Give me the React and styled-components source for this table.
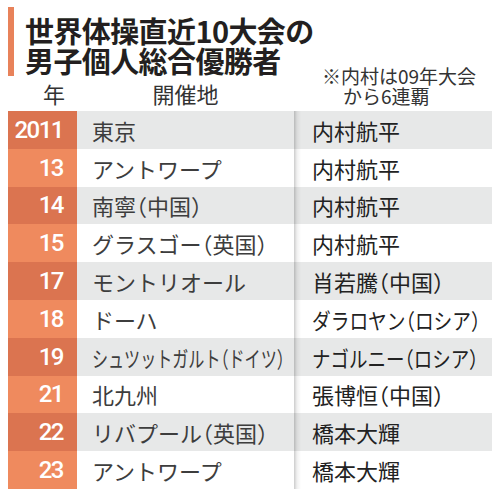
import React from 'react';
import styled, { createGlobalStyle } from 'styled-components';

const results = [
  { year: '2011', venue: '東京', winner: '内村航平' },
  { year: '13', venue: 'アントワープ', winner: '内村航平' },
  { year: '14', venue: '南寧（中国）', winner: '内村航平' },
  { year: '15', venue: 'グラスゴー（英国）', winner: '内村航平' },
  { year: '17', venue: 'モントリオール', winner: '肖若騰（中国）' },
  { year: '18', venue: 'ドーハ', winner: 'ダラロヤン（ロシア）', winnerFit: 0.85 },
  { year: '19', venue: 'シュツットガルト（ドイツ）', venueFit: 0.73, winner: 'ナゴルニー（ロシア）', winnerFit: 0.84 },
  { year: '21', venue: '北九州', winner: '張博恒（中国）' },
  { year: '22', venue: 'リバプール（英国）', winner: '橋本大輝' },
  { year: '23', venue: 'アントワープ', winner: '橋本大輝' },
];

// full-width parens are set half width, as in the newspaper font
const withParens = (text) =>
  text.split(/([（）])/).map((part, i) =>
    part === '（' || part === '）' ? <Paren key={i}>{part}</Paren> : part
  );

const App = () => {
  return (
    <>
      <GlobalStyle />
      <Wrapper>
        <Top>
          <Heading>
            <Bar />
            <Title>
              世界体操直近10大会の
              <br />
              男子個人総合優勝者
            </Title>
          </Heading>
          <ColHead align="right">年</ColHead>
          <ColHead align="center">開催地</ColHead>
          <Note>
            <span>※内村は09年大会</span>
            <span className="second">から6連覇</span>
          </Note>
        </Top>

        <Table>
          {results.map((r, i) => (
            <Row key={r.year} $shaded={i % 2 === 0}>
              <Year $shaded={i % 2 === 0}>{r.year}</Year>
              <Venue>
                <Fit $squeeze={r.venueFit}>{withParens(r.venue)}</Fit>
              </Venue>
              <Winner>
                <Fit $squeeze={r.winnerFit}>{withParens(r.winner)}</Fit>
              </Winner>
            </Row>
          ))}
        </Table>
      </Wrapper>
    </>
  );
};

const GlobalStyle = createGlobalStyle`
  body {
    margin: 0;
    background: #fff;
    font-family: 'Noto Sans CJK JP', 'Noto Sans', sans-serif;
  }
`;

const Wrapper = styled.main`
  width: 500px;
  height: 500px;
  box-sizing: border-box;
  padding: 7px 8px 0;
  overflow: hidden;
`;

const Top = styled.header`
  display: grid;
  grid-template-columns: 69px 217px 1fr;
  grid-template-rows: auto 35px;
`;

const Heading = styled.div`
  grid-column: 1 / -1;
  grid-row: 1;
  display: flex;
  gap: 11px;
`;

const Bar = styled.div`
  width: 6px;
  background: #e8825a;
`;

const Title = styled.h1`
  margin: 0;
  padding: 8px 0 1px;
  font-size: 29px;
  line-height: 30px;
  font-weight: 700;
  color: #231f20;
  letter-spacing: -0.6px;
`;

const ColHead = styled.div`
  grid-row: 2;
  font-size: 22px;
  line-height: 35px;
  color: #333;
  text-align: ${(p) => p.align};
  padding-right: ${(p) => (p.align === 'right' ? '12px' : '0')};
`;

const Note = styled.div`
  grid-column: 3;
  grid-row: 1 / 3;
  align-self: end;
  display: flex;
  flex-direction: column;
  padding: 0 0 5px 28px;
  font-size: 19px;
  line-height: 20px;
  color: #333;

  .second {
    padding-left: 21px;
  }
`;

const Table = styled.section`
  display: flex;
  flex-direction: column;
`;

const Row = styled.div`
  display: grid;
  grid-template-columns: 69px 217px 1fr;
  height: 37.8px;
  background: ${(p) => (p.$shaded ? '#e7e8e8' : '#fff')};
`;

const Year = styled.div`
  background: ${(p) => (p.$shaded ? '#db7450' : '#ef8a5e')};
  color: #fff;
  font-family: Roboto, 'Liberation Sans', sans-serif;
  font-weight: 500;
  font-size: 24px;
  letter-spacing: -1.5px;
  display: flex;
  align-items: center;
  justify-content: flex-end;
  padding-right: 14px;
`;

const Venue = styled.div`
  display: flex;
  align-items: center;
  padding-left: 15px;
  font-size: 22px;
  color: #3d3d3d;
  white-space: nowrap;
`;

const Winner = styled(Venue)`
  padding-left: 18px;
  color: #222;
  background-image: linear-gradient(
    to right,
    rgba(0, 0, 0, 0.2),
    rgba(0, 0, 0, 0.06) 3px,
    rgba(0, 0, 0, 0) 7px
  );
`;

const Fit = styled.span`
  display: inline-block;
  transform-origin: left center;
  transform: scaleX(${(p) => p.$squeeze || 1});
`;

const Paren = styled.span`
  font-feature-settings: 'halt' 1;
`;

export default App;
